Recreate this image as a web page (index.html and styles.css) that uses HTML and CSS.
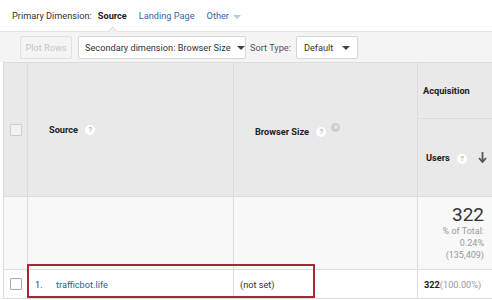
FILE: index.html
```html
<!DOCTYPE html>
<html lang="en">
<head>
  <meta charset="UTF-8" />
  <title>Source report</title>
  <link rel="stylesheet" href="styles.css">
</head>
<body>

  <div class="dims">
    <span class="dims-label">Primary Dimension:</span>
    <span class="dim active">Source</span>
    <a class="dim">Landing Page</a>
    <a class="dim">Other <span class="caret light"></span></a>
  </div>

  <div class="toolbar">
    <button class="btn disabled">Plot Rows</button>
    <button class="btn wide">Secondary dimension: Browser Size <span class="caret"></span></button>
    <span class="sort-label">Sort Type:</span>
    <button class="btn">Default <span class="caret"></span></button>
  </div>

  <div class="report">
    <table class="grid">
      <colgroup>
        <col class="c-check">
        <col class="c-source">
        <col class="c-browser">
        <col class="c-users">
      </colgroup>
      <thead>
        <tr class="head-top">
          <th rowspan="2"><span class="checkbox"></span></th>
          <th rowspan="2" class="dim-head">Source <span class="help">?</span></th>
          <th rowspan="2" class="dim-head">Browser Size <span class="help">?</span><span class="remove">&times;</span></th>
          <th class="group">Acquisition</th>
        </tr>
        <tr class="head-bottom">
          <th class="metric">
            <span>Users <span class="help">?</span></span>
            <svg class="sort-arrow" width="9" height="11" viewBox="0 0 9 11"><path d="M4.5 0v9M1 6l3.5 4L8 6" fill="none" stroke="#555" stroke-width="1.8"/></svg>
          </th>
        </tr>
      </thead>
      <tbody>
        <tr class="summary">
          <td></td>
          <td></td>
          <td></td>
          <td class="total">
            <div class="total-num">322</div>
            <div class="total-sub">% of Total:<br>0.24%<br>(135,409)</div>
          </td>
        </tr>
        <tr class="row">
          <td><span class="checkbox"></span></td>
          <td><span class="idx">1.</span><a class="link">trafficbot.life</a></td>
          <td>(not set)</td>
          <td class="val"><b>322</b><span class="pct">(100.00%)</span></td>
        </tr>
      </tbody>
    </table>
    <div class="highlight"></div>
  </div>

</body>
</html>
```

FILE: styles.css
```css
body {
  margin: 0;
  background: #fff;
  color: #333;
  font-family: Roboto, "Liberation Sans", sans-serif;
  font-size: 9.2px;
}

.dims {
  display: flex;
  align-items: center;
  height: 31px;
  padding-left: 12px;
}

.dims-label {
  margin-right: 6px;
}

.dim {
  margin-right: 12px;
  color: #3367b0;
}

.dim.active {
  position: relative;
  color: #222;
  font-weight: 700;
}

.dim.active::after {
  content: "";
  position: absolute;
  left: 11px;
  top: 18px;
  width: 6px;
  height: 6px;
  background: #f4f4f4;
  border-left: 1px solid #dedede;
  border-top: 1px solid #dedede;
  transform: rotate(45deg);
}

.caret {
  display: inline-block;
  margin-left: 6px;
  vertical-align: middle;
  border-left: 4px solid transparent;
  border-right: 4px solid transparent;
  border-top: 4px solid #444;
}

.caret.light {
  margin-left: 2px;
  border-top-color: #b7c7dc;
}

.toolbar {
  display: flex;
  align-items: center;
  height: 31px;
  padding-left: 20px;
  background: #f4f4f4;
  border-top: 1px solid #e2e2e2;
  box-sizing: border-box;
}

.btn {
  height: 23px;
  padding: 0 7px;
  border: 1px solid #d6d6d6;
  border-radius: 2px;
  background: #fff;
  color: #333;
  font-family: inherit;
  font-size: 9.2px;
  white-space: nowrap;
}

.btn.disabled {
  width: 52px;
  padding: 0;
  margin-right: 6px;
  background: #f4f4f4;
  border-color: #e0e0e0;
  color: #c6c6c6;
}

.btn.wide {
  width: 168px;
  padding: 0 0 0 6px;
  text-align: left;
  margin-right: 4px;
}

.btn.wide .caret {
  margin-left: 4px;
}

.sort-label {
  margin-right: 5px;
  color: #555;
}

.report {
  position: relative;
  padding-left: 3px;
}

.grid {
  width: 489px;
  border-collapse: collapse;
  table-layout: fixed;
}

.c-check { width: 24px; }
.c-source { width: 206px; }
.c-browser { width: 184px; }
.c-users { width: 75px; }

.grid th,
.grid td {
  border: 1px solid #dcdcdc;
  padding: 0;
}

.grid th {
  background: #e9e9e9;
  color: #222;
  font-weight: 700;
  text-align: left;
}

.head-top {
  height: 56px;
}

.head-bottom {
  height: 78px;
}

.checkbox {
  display: block;
  width: 10px;
  height: 10px;
  margin: 0 auto;
  border: 1px solid #cfcfcf;
  border-radius: 1px;
  background: #f2f2f2;
}

.row .checkbox {
  background: #fff;
  border-color: #a9a9a9;
}

.dim-head {
  padding-left: 21px !important;
  white-space: nowrap;
}

.help {
  display: inline-block;
  width: 10px;
  height: 10px;
  margin-left: 5px;
  border-radius: 50%;
  background: #fff;
  color: #b8b8b8;
  font-size: 7.5px;
  line-height: 10px;
  text-align: center;
  vertical-align: 1px;
}

.remove {
  display: inline-block;
  width: 9px;
  height: 9px;
  margin-left: 5px;
  border-radius: 50%;
  background: #cdcdcd;
  color: #e9e9e9;
  font-size: 9px;
  line-height: 8px;
  text-align: center;
  vertical-align: 5px;
}

.group {
  padding-left: 5px !important;
  vertical-align: middle;
}

.metric {
  padding: 0 5px 0 8px !important;
}

.metric span {
  vertical-align: middle;
}

.sort-arrow {
  float: right;
  margin-top: 1px;
}

.summary td {
  height: 72px;
  background: #f8f8f8;
}

.total {
  padding-right: 8px !important;
  text-align: right;
}

.total-num {
  font-size: 19px;
  line-height: 20px;
  color: #333;
}

.total-sub {
  color: #999;
  font-size: 9px;
  line-height: 12px;
}

.row td {
  height: 28px;
  background: #fff;
}

.row td:nth-child(2) {
  padding-left: 7px;
}

.row td:nth-child(3) {
  padding-left: 6px;
}

.idx {
  display: inline-block;
  width: 21px;
}

.link {
  color: #2c5e99;
}

.val {
  padding-left: 6px !important;
  white-space: nowrap;
  color: #222;
}

.pct {
  color: #999;
}

.highlight {
  position: absolute;
  left: 27px;
  top: 202px;
  width: 284px;
  height: 30px;
  border: 2px solid #ad2436;
}
```
